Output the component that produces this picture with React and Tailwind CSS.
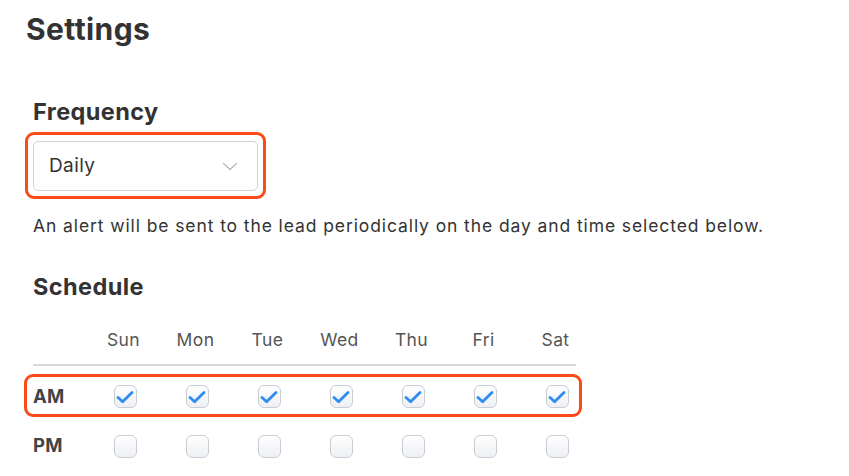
import React from "react";

const days = ["Sun", "Mon", "Tue", "Wed", "Thu", "Fri", "Sat"];

const Check = ({ checked }) => (
  <div className="w-[23px] h-[23px] rounded-[6px] border-[1.5px] border-[#c9ccd4] bg-gradient-to-b from-white to-[#eef0f3] flex items-center justify-center">
    {checked && (
      <svg width="18" height="14" viewBox="0 0 18 14" fill="none">
        <path d="M2 7.5l4.6 4.3L16 2.5" stroke="#2f8cf3" strokeWidth="2.8" strokeLinecap="round" strokeLinejoin="round" />
      </svg>
    )}
  </div>
);

const Row = ({ label, checked }) => (
  <div className="flex items-center">
    <div className="w-[56px] text-[18.5px] font-bold text-[#444] tracking-[0.3px]">{label}</div>
    {days.map((d) => (
      <div key={d} className="w-[72px] flex justify-center">
        <Check checked={checked} />
      </div>
    ))}
  </div>
);

export default function App() {
  return (
    <div className="w-[849px] h-[476px] bg-white text-[#333] overflow-hidden" style={{ fontFamily: "Inter, 'Liberation Sans', Arial, sans-serif" }}>
      <h1 className="pl-[26px] pt-[11px] text-[30px] font-bold leading-[36px] text-[#333] tracking-[0.4px]">Settings</h1>

      <div className="pl-[33px]">
        <h2 className="mt-[52px] text-[23.5px] font-bold leading-[26px] text-[#333] tracking-[0.4px]">Frequency</h2>

        <div className="-ml-[8px] mt-[7px] w-[241px] h-[67px] border-[3px] border-[#fb4a1a] rounded-[9px] pl-[5px] pt-[6px]">
          <div className="w-[225px] h-[50px] border border-[#cfd2d8] rounded-[5px] flex items-center justify-between pl-[15px] pr-[19px]">
            <span className="text-[19px] text-[#333] tracking-[0.4px]">Daily</span>
            <svg width="16" height="9" viewBox="0 0 16 9" fill="none">
              <path d="M1 1l7 6.5L15 1" stroke="#b8bbc2" strokeWidth="1.3" />
            </svg>
          </div>
        </div>

        <p className="mt-[16px] text-[17.5px] leading-[22px] text-[#333] tracking-[0.9px]">
          An alert will be sent to the lead periodically on the day and time selected below.
        </p>

        <h2 className="mt-[37px] text-[23.5px] font-bold leading-[26px] text-[#333] tracking-[0.4px]">Schedule</h2>

        <div className="mt-[29px] flex pl-[56px] text-[17.5px] text-[#555] leading-[22px] tracking-[0.4px]">
          {days.map((d) => (
            <div key={d} className="w-[72px] text-center pr-[3px]">{d}</div>
          ))}
        </div>
        <div className="mt-[13px] w-[543px] h-[2px] bg-[#d6d7da]" />

        <div className="-ml-[9px] mt-[8px] w-[558px] h-[43px] border-[3px] border-[#fb4a1a] rounded-[9px] pl-[6px] pt-[2px] flex items-center">
          <Row label="AM" checked />
        </div>
        <div className="mt-[8px] h-[42px] flex items-center">
          <Row label="PM" checked={false} />
        </div>
      </div>
    </div>
  );
}
